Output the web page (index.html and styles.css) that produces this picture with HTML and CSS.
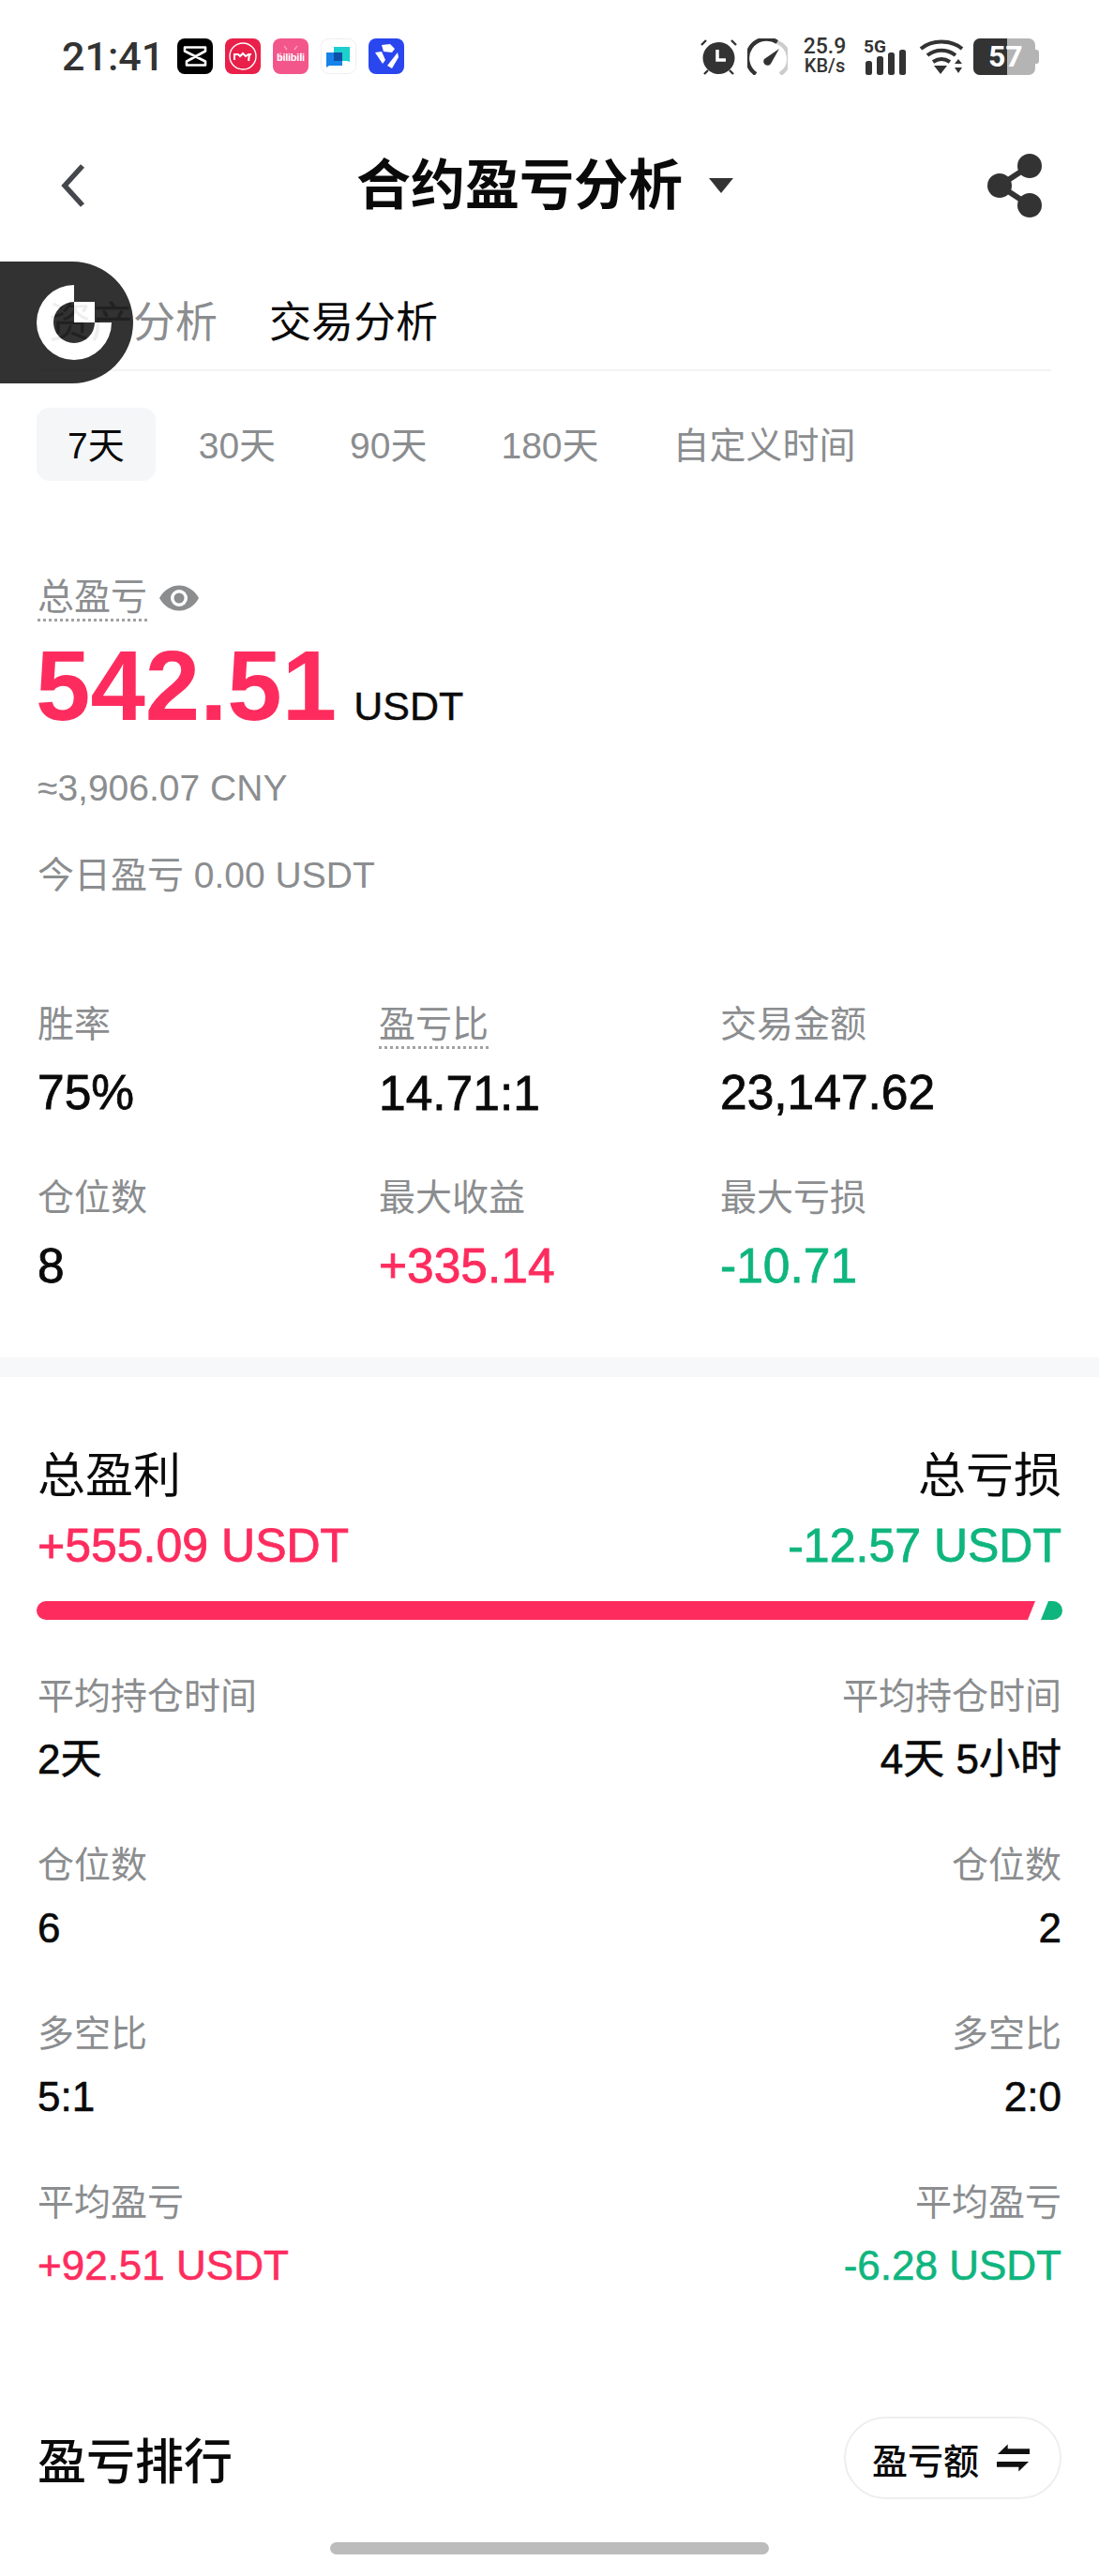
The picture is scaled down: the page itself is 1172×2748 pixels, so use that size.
FILE: index.html
```html
<!DOCTYPE html>
<html lang="zh-CN">
<head>
  <meta charset="UTF-8" />
  <title>合约盈亏分析</title>
  <link rel="stylesheet" href="styles.css">
</head>
<body>

  <div class="status-bar">
    <div class="status-left">
      <span class="clock">21:41</span>
      <svg class="app-icon" viewBox="0 0 38 38"><rect width="38" height="38" rx="8" fill="#000"/><path d="M8 9.5h22v4L10 24.5v4h20v-4L8 13.500v-4z" fill="none" stroke="#fff" stroke-width="2.600" stroke-linejoin="round"/></svg>
      <svg class="app-icon" viewBox="0 0 38 38"><rect width="38" height="38" rx="8" fill="#e8204a"/><circle cx="19" cy="19" r="14" fill="none" stroke="#fff" stroke-width="1.400"/><path d="M10 23v-6h4l2 2 3-3 3 3 3-2h3M26 17l-1 7" fill="none" stroke="#fff" stroke-width="2"/></svg>
      <svg class="app-icon" viewBox="0 0 38 38"><rect width="38" height="38" rx="8" fill="#f2568a"/><path d="M12 8l3 4M26 8l-3 4M8 15v9M30 15v9" stroke="#f99ab9" stroke-width="1.500"/><text x="19" y="24" text-anchor="middle" textLength="30" class="bili-text">bilibili</text></svg>
      <svg class="app-icon" viewBox="0 0 38 38"><rect x=".5" y=".5" width="37" height="37" rx="8" fill="#fff" stroke="#eee"/><path d="M14 9h17v16l-3-1H14z" fill="#1cd0cc"/><path d="M6 15h17v14H9l-3 2z" fill="#1683e8"/><rect x="14" y="15" width="9" height="9" fill="#0e4fa8"/></svg>
      <svg class="app-icon" viewBox="0 0 38 38"><rect width="38" height="38" rx="8" fill="#2a46ef"/><path d="M14 7l9-1 5 5-3 4-9-1zM7 15l7-1 4 9-3 4zM31 15l1 5-7 12-5-3z" fill="#fff"/></svg>
    </div>
    <div class="status-right">
      <svg class="sys-alarm" width="39" height="39" viewBox="0 0 39 39"><circle cx="19.500" cy="21" r="17" fill="#333"/><path d="M18 12v11h9" fill="none" stroke="#fff" stroke-width="3.500"/><path d="M1 7l5-5M38 7l-5-5M4 38l4-4M35 38l-4-4" stroke="#333" stroke-width="2.400"/></svg>
      <svg class="sys-gauge" width="43" height="39" viewBox="0 0 43 39"><path d="M9 38A19 19 0 0 1 32 4" fill="none" stroke="#333" stroke-width="4.400"/><path d="M32 4A19 19 0 0 1 35 38" fill="none" stroke="#ccc" stroke-width="4.400"/><path d="M34 11L25 27a4 4 0 0 1-7-5z" fill="#333"/></svg>
      <div class="net-speed"><span>25.9</span><span class="net-unit">KB/s</span></div>
      <div class="signal">
        <span class="signal-text">5G</span>
        <svg width="46" height="39" viewBox="0 0 46 39"><rect x="2" y="24" width="7" height="15" rx="2.500" fill="#333"/><rect x="14" y="19" width="7" height="20" rx="2.500" fill="#333"/><rect x="26" y="15" width="7" height="24" rx="2.500" fill="#333"/><rect x="38" y="12" width="7" height="27" rx="2.500" fill="#333"/></svg>
      </div>
      <svg class="sys-wifi" width="48" height="39" viewBox="0 0 48 39"><path d="M2 11C14 1 34 1 46 11M9 18c9-7 21-7 30 0M15 25c6-4 12-4 18 0" fill="none" stroke="#333" stroke-width="4"/><path d="M16 29h14l-7 9zM38 27l4-5 4 5zM38 31h8l-4 6z" fill="#333"/></svg>
      <div class="battery"><span class="battery-fill"></span><span class="battery-num">57</span></div>
    </div>
  </div>

  <div class="nav-bar">
    <svg class="back-icon" width="28" height="48" viewBox="0 0 28 48"><path d="M24 3L5 24l19 21" fill="none" stroke="#44474b" stroke-width="5.500"/></svg>
    <div class="nav-title">
      <h1>合约盈亏分析</h1>
      <span class="caret"></span>
    </div>
    <svg class="share-icon" width="60" height="68" viewBox="0 0 60 68"><path d="M46 13L14 34l32 21" fill="none" stroke="#333" stroke-width="6"/><circle cx="46" cy="13" r="13" fill="#333"/><circle cx="14" cy="34" r="13" fill="#333"/><circle cx="46" cy="55" r="13" fill="#333"/></svg>
  </div>

  <div class="tabs">
    <span class="tab">资产分析</span>
    <span class="tab tab-active">交易分析</span>
  </div>

  <div class="periods">
    <span class="period period-active">7天</span>
    <span class="period">30天</span>
    <span class="period">90天</span>
    <span class="period">180天</span>
    <span class="period">自定义时间</span>
  </div>

  <section class="summary">
    <div class="summary-label">
      <span class="dotted">总盈亏</span>
      <svg width="44" height="30" viewBox="0 0 44 30"><path d="M1 15C11 -3 33 -3 43 15 33 33 11 33 1 15z" fill="#8b8d8f"/><circle cx="22" cy="15" r="9" fill="#fff"/><circle cx="22" cy="15" r="5.500" fill="#8b8d8f"/></svg>
    </div>
    <div class="total">
      <span class="total-num">542.51</span>
      <span class="total-unit">USDT</span>
    </div>
    <div class="muted approx">≈3,906.07 CNY</div>
    <div class="muted today">今日盈亏 0.00 USDT</div>
  </section>

  <section class="stats">
    <div class="stat">
      <div class="muted">胜率</div>
      <div class="value">75%</div>
    </div>
    <div class="stat">
      <div class="muted"><span class="dotted">盈亏比</span></div>
      <div class="value">14.71:1</div>
    </div>
    <div class="stat">
      <div class="muted">交易金额</div>
      <div class="value">23,147.62</div>
    </div>
    <div class="stat">
      <div class="muted">仓位数</div>
      <div class="value">8</div>
    </div>
    <div class="stat">
      <div class="muted">最大收益</div>
      <div class="value up">+335.14</div>
    </div>
    <div class="stat">
      <div class="muted">最大亏损</div>
      <div class="value down">-10.71</div>
    </div>
  </section>

  <div class="band"></div>

  <section class="pnl">
    <div class="pnl-head">
      <div>
        <div class="pnl-title">总盈利</div>
        <div class="value up">+555.09 USDT</div>
      </div>
      <div class="right">
        <div class="pnl-title">总亏损</div>
        <div class="value down">-12.57 USDT</div>
      </div>
    </div>

    <div class="ratio-bar">
      <span class="ratio-win"></span>
      <span class="ratio-loss"></span>
    </div>

    <div class="pnl-rows">
      <div>
        <div class="muted">平均持仓时间</div>
        <div class="value small">2天</div>
      </div>
      <div class="right">
        <div class="muted">平均持仓时间</div>
        <div class="value small">4天 5小时</div>
      </div>
      <div>
        <div class="muted">仓位数</div>
        <div class="value small">6</div>
      </div>
      <div class="right">
        <div class="muted">仓位数</div>
        <div class="value small">2</div>
      </div>
      <div>
        <div class="muted">多空比</div>
        <div class="value small">5:1</div>
      </div>
      <div class="right">
        <div class="muted">多空比</div>
        <div class="value small">2:0</div>
      </div>
      <div>
        <div class="muted">平均盈亏</div>
        <div class="value small up">+92.51 USDT</div>
      </div>
      <div class="right">
        <div class="muted">平均盈亏</div>
        <div class="value small down">-6.28 USDT</div>
      </div>
    </div>
  </section>

  <div class="rank-head">
    <h2>盈亏排行</h2>
    <button class="sort-btn">
      盈亏额
      <svg width="35" height="32" viewBox="0 0 36 32"><path d="M12 1L1 12h35v-6H12zM24 31l11-11H0v6h24z" fill="#111"/></svg>
    </button>
  </div>

  <div class="home-bar"></div>

  <div class="float-ball">
    <svg width="80" height="80" viewBox="0 0 80 80"><path d="M40 0A40 40 0 1 0 80 40H62A22 22 0 1 1 40 18z" fill="#fff"/><rect x="40" y="18" width="22" height="22" fill="#fff"/></svg>
  </div>

</body>
</html>
```

FILE: styles.css
```css
:root {
  --red: #fe2c5e;
  --green: #0fb57e;
  --gray: #8b8d8f;
  --text: #0a0a0a;
  --font: "Liberation Sans", "Noto Sans CJK SC", sans-serif;
}

* {
  box-sizing: border-box;
  margin: 0;
  padding: 0;
}

body {
  position: relative;
  width: 1172px;
  height: 2748px;
  overflow: hidden;
  background-color: #fff;
  color: var(--text);
  font-family: var(--font);
  font-size: 39px;
}

.status-bar {
  display: flex;
  justify-content: space-between;
  align-items: center;
  height: 120px;
  padding: 0 64px 0 66px;
}

.status-left, .status-right {
  display: flex;
  align-items: center;
}

.status-left {
  gap: 13px;
}

.clock {
  margin-right: 1px;
  font-family: Roboto, sans-serif;
  font-size: 43px;
  font-weight: 500;
  color: #333;
}

.app-icon {
  width: 38px;
  height: 38px;
}

.sys-gauge {
  margin-left: 11px;
}

.net-speed {
  display: flex;
  flex-direction: column;
  align-items: center;
  width: 45px;
  margin-left: 17px;
  font-family: Roboto, sans-serif;
  font-size: 23px;
  font-weight: 500;
  line-height: 21px;
  color: #333;
}

.net-unit {
  font-size: 20px;
}

.signal {
  position: relative;
  height: 39px;
  margin-left: 19px;
}

.signal-text {
  position: absolute;
  top: 0;
  left: 0;
  font-family: Roboto, sans-serif;
  font-size: 19px;
  font-weight: 700;
  line-height: 18px;
  color: #333;
}

.sys-wifi {
  margin-left: 13px;
}

.battery {
  position: relative;
  width: 66px;
  height: 39px;
  margin: 0 4px 0 10px;
  border-radius: 7px;
  background-color: #b4b4b4;
}

.battery::after {
  content: "";
  position: absolute;
  top: 12px;
  right: -4px;
  width: 4px;
  height: 15px;
  border-radius: 0 3px 3px 0;
  background-color: #b4b4b4;
}

.battery-fill {
  display: block;
  width: 36px;
  height: 100%;
  border-radius: 7px 0 0 7px;
  background-color: #333;
}

.battery-num {
  position: absolute;
  top: 0;
  left: 16px;
  font-family: Roboto, sans-serif;
  font-size: 32px;
  font-weight: 700;
  line-height: 39px;
  color: #fff;
}

.nav-bar {
  display: flex;
  justify-content: space-between;
  align-items: center;
  height: 156px;
  padding: 0 60px 0 64px;
}

.nav-title {
  display: flex;
  align-items: center;
  gap: 28px;
  margin-left: 18px;
}

h1 {
  font-size: 58px;
  font-weight: 700;
  line-height: 70px;
  color: var(--text);
}

.caret {
  width: 0;
  height: 0;
  border-left: 13px solid transparent;
  border-right: 13px solid transparent;
  border-top: 16px solid #333;
}

.tabs {
  display: flex;
  align-items: center;
  gap: 55px;
  height: 120px;
  margin: 0 51px 0 40px;
  padding: 20px 0 0 12px;
  border-bottom: 2px solid #f2f3f4;
}

.tab {
  font-size: 45px;
  line-height: 60px;
  color: var(--gray);
}

.tab-active {
  color: var(--text);
}

.periods {
  display: flex;
  gap: 13px;
  margin: 39px 0 0 39px;
}

.period {
  height: 78px;
  padding: 0 33px;
  border-radius: 14px;
  line-height: 82px;
  color: var(--gray);
}

.period-active {
  background-color: #f4f6f8;
  color: var(--text);
}

.summary {
  margin: 100px 0 0 40px;
}

.summary-label {
  display: flex;
  align-items: center;
  gap: 12px;
  height: 50px;
  color: var(--gray);
}

.dotted {
  display: inline-block;
  border-bottom: 3px dotted #a0a2a4;
  line-height: 46px;
}

.total {
  display: flex;
  align-items: baseline;
  gap: 18px;
  height: 110px;
  margin: 14px 0 0 -2px;
}

.total-num {
  font-size: 105px;
  font-weight: 700;
  line-height: 110px;
  color: var(--red);
}

.total-unit {
  font-size: 43px;
  line-height: 50px;
  -webkit-text-stroke: 0.4px;
}

.muted {
  line-height: 50px;
  color: var(--gray);
}

.approx {
  margin-top: 29px;
}

.today {
  margin-top: 43px;
}

.stats {
  display: grid;
  grid-template-columns: repeat(3, 364px);
  row-gap: 57px;
  margin: 109px 0 0 40px;
}

.value {
  margin-top: 17px;
  font-size: 50px;
  line-height: 60px;
  -webkit-text-stroke: 0.8px;
}

.stat .value {
  font-size: 51.5px;
}

.up {
  color: var(--red);
}

.down {
  color: var(--green);
}

.band {
  height: 21px;
  margin-top: 68px;
  background-color: #f7f8f9;
}

.pnl {
  padding: 76px 40px 0;
}

.pnl-head {
  display: flex;
  justify-content: space-between;
}

.pnl-title {
  font-size: 51px;
  line-height: 60px;
}

.pnl-head .value {
  margin-top: 14px;
}

.right {
  text-align: right;
}

.ratio-bar {
  display: flex;
  gap: 6px;
  height: 20px;
  margin: 29px -1px 0 -1px;
}

.ratio-win {
  flex: 1;
  border-radius: 10px 0 0 10px;
  background-color: var(--red);
  clip-path: polygon(0 0, 100% 0, calc(100% - 8px) 100%, 0 100%);
}

.ratio-loss {
  width: 23px;
  border-radius: 0 10px 10px 0;
  background-color: var(--green);
  clip-path: polygon(8px 0, 100% 0, 100% 100%, 0 100%);
}

.pnl-rows {
  display: grid;
  grid-template-columns: 1fr 1fr;
  row-gap: 58px;
  margin-top: 57px;
}

.small {
  margin-top: 12px;
  font-size: 44px;
  -webkit-text-stroke: 0.6px;
}

.rank-head {
  display: flex;
  justify-content: space-between;
  align-items: center;
  height: 88px;
  margin-top: 131px;
  padding: 0 40px;
}

h2 {
  font-size: 52px;
  font-weight: 500;
}

.sort-btn {
  display: flex;
  align-items: center;
  gap: 19px;
  width: 232px;
  height: 88px;
  padding-left: 28px;
  border: 2px solid #eeeeee;
  border-radius: 44px;
  background-color: #fff;
  font-family: var(--font);
  font-size: 38px;
  font-weight: 500;
  color: var(--text);
}

.home-bar {
  width: 468px;
  height: 13px;
  margin: 46px auto 0;
  border-radius: 7px;
  background-color: #bcbcbc;
}

.bili-text {
  font-family: "Liberation Sans", sans-serif;
  font-size: 11px;
  font-weight: 700;
  fill: #fff;
}

/* floats over the tab row */
.float-ball {
  position: absolute;
  top: 279px;
  left: 0;
  display: flex;
  align-items: center;
  width: 142px;
  height: 130px;
  padding-left: 39px;
  border-radius: 0 65px 65px 0;
  background-color: #0f0f0f;
  opacity: 0.85;
}
```
